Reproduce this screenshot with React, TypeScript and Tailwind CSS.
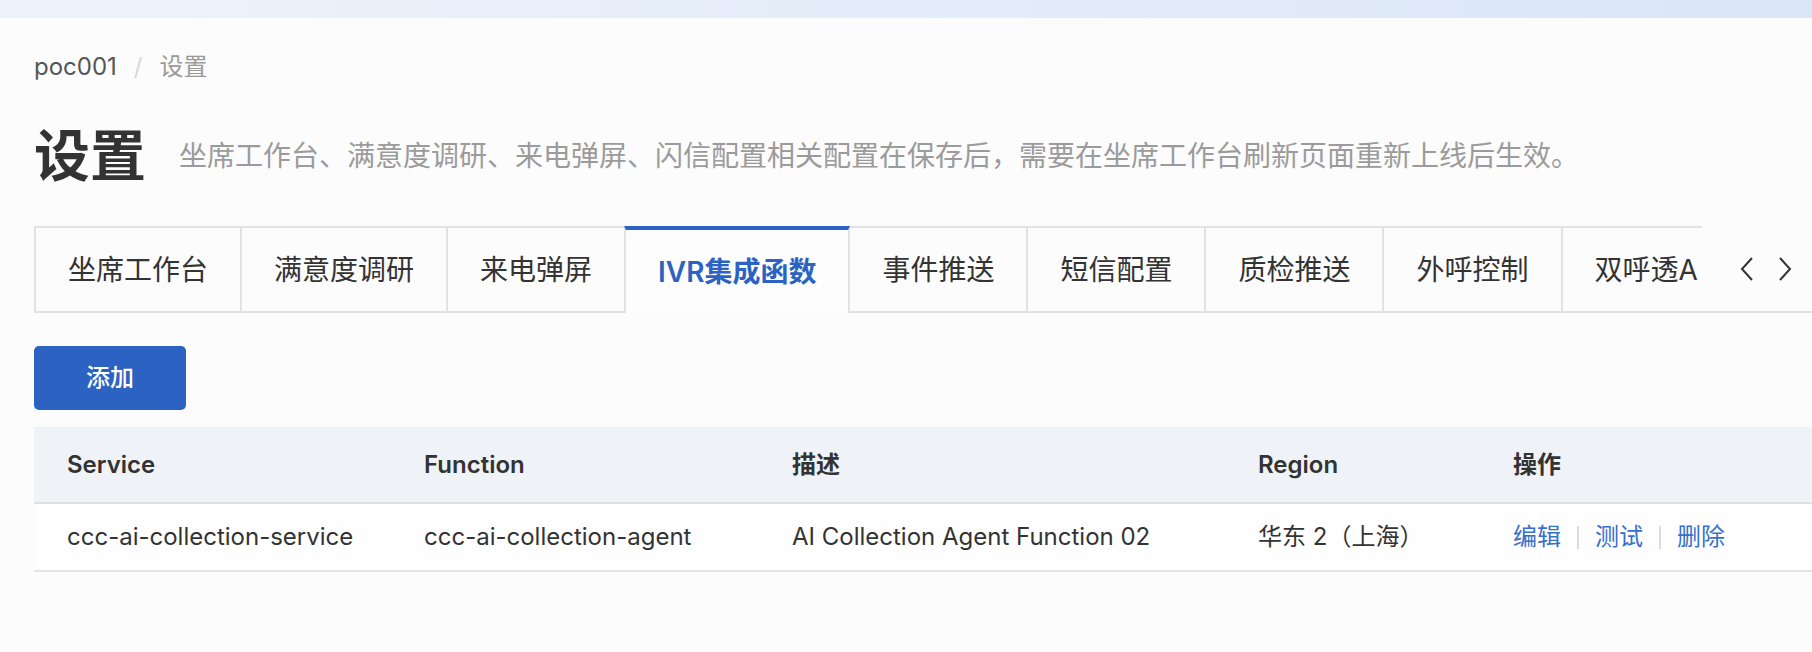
import React from "react";

const tabs = [
  "坐席工作台",
  "满意度调研",
  "来电弹屏",
  "IVR集成函数",
  "事件推送",
  "短信配置",
  "质检推送",
  "外呼控制",
  "双呼透A",
];
const activeIndex = 3;

function Chevron({ dir }: { dir: "left" | "right" }) {
  return (
    <svg width="14" height="26" viewBox="0 0 14 26" fill="none">
      {dir === "left" ? (
        <polyline points="12,2 2,13 12,24" stroke="#333" strokeWidth="2" strokeLinejoin="miter" />
      ) : (
        <polyline points="2,2 12,13 2,24" stroke="#333" strokeWidth="2" strokeLinejoin="miter" />
      )}
    </svg>
  );
}

export default function App() {
  return (
    <div className="min-h-[652px] w-full bg-[#fcfcfc] font-[Inter,'Noto_Sans_CJK_SC',sans-serif] text-[#333]">
      <div className="h-[18px] w-full bg-gradient-to-r from-[#eef3fb] to-[#dae6f8]" />

      <div className="pl-[34px]">
        {/* breadcrumb */}
        <div className="mt-[32px] flex h-[34px] items-center text-[24px] leading-none">
          <span className="text-[#555]">poc001</span>
          <span className="mx-[17px] text-[#d8d8d8]">/</span>
          <span className="text-[#9a9a9a]">设置</span>
        </div>

        {/* title */}
        <div className="mt-[40px] flex h-[64px] items-center">
          <h1 className="text-[56px] font-bold leading-none text-[#333]">设置</h1>
          <p className="ml-[33px] text-[28px] leading-none text-[#9b9b9b]">
            坐席工作台、满意度调研、来电弹屏、闪信配置相关配置在保存后，需要在坐席工作台刷新页面重新上线后生效。
          </p>
        </div>

        {/* tabs */}
        <div className="mt-[38px] flex h-[87px]">
          <div className="flex min-w-0 flex-1 overflow-hidden">
            {tabs.map((t, i) => {
              const active = i === activeIndex;
              if (active) {
                return (
                  <div
                    key={t}
                    className="flex h-[87px] shrink-0 items-center border-x-2 border-t-4 border-x-[#e2e2e2] border-t-[#2c62c2] bg-[#fdfdfd] px-8 text-[28px] font-semibold leading-none text-[#2c62c2]"
                  >
                    {t}
                  </div>
                );
              }
              return (
                <div
                  key={t}
                  className={`flex h-[87px] shrink-0 items-center border-y-2 border-[#e2e2e2] px-8 text-[28px] leading-none text-[#333] ${
                    i === activeIndex + 1 ? "" : "border-l-2"
                  }`}
                >
                  {t}
                </div>
              );
            })}
          </div>
          <div className="flex h-[87px] w-[110px] shrink-0 items-center border-b-2 border-[#e2e2e2] pl-[38px]">
            <Chevron dir="left" />
            <span className="ml-[24px]">
              <Chevron dir="right" />
            </span>
          </div>
        </div>

        {/* button */}
        <button className="mt-[33px] flex h-[64px] w-[152px] items-center justify-center rounded-[5px] bg-[#2c62c2] text-[24px] font-medium text-white">
          添加
        </button>

        {/* table */}
        <table className="mt-[17px] w-full table-fixed border-collapse text-[24px]">
          <colgroup>
            <col className="w-[358px]" />
            <col className="w-[368px]" />
            <col className="w-[466px]" />
            <col className="w-[255px]" />
            <col />
          </colgroup>
          <thead>
            <tr className="h-[76px] border-b-2 border-[#dde0e5] bg-[#eff2f7] text-left">
              <th className="pl-[33px] font-semibold">Service</th>
              <th className="pl-[32px] font-semibold">Function</th>
              <th className="pl-[32px] font-semibold">描述</th>
              <th className="pl-[32px] font-semibold">Region</th>
              <th className="pl-[32px] font-semibold">操作</th>
            </tr>
          </thead>
          <tbody>
            <tr className="h-[68px] border-b-2 border-[#e3e4e6] bg-[#fefefe]">
              <td className="pl-[33px]">ccc-ai-collection-service</td>
              <td className="pl-[32px]">ccc-ai-collection-agent</td>
              <td className="pl-[32px]">AI Collection Agent Function 02</td>
              <td className="pl-[32px]">华东 2（上海）</td>
              <td className="pl-[32px]">
                <div className="flex items-center text-[#3570cc]">
                  <span>编辑</span>
                  <span className="mx-[16px] h-[23px] w-[2px] bg-[#dcdcdc]" />
                  <span>测试</span>
                  <span className="mx-[16px] h-[23px] w-[2px] bg-[#dcdcdc]" />
                  <span>删除</span>
                </div>
              </td>
            </tr>
          </tbody>
        </table>
      </div>
    </div>
  );
}
